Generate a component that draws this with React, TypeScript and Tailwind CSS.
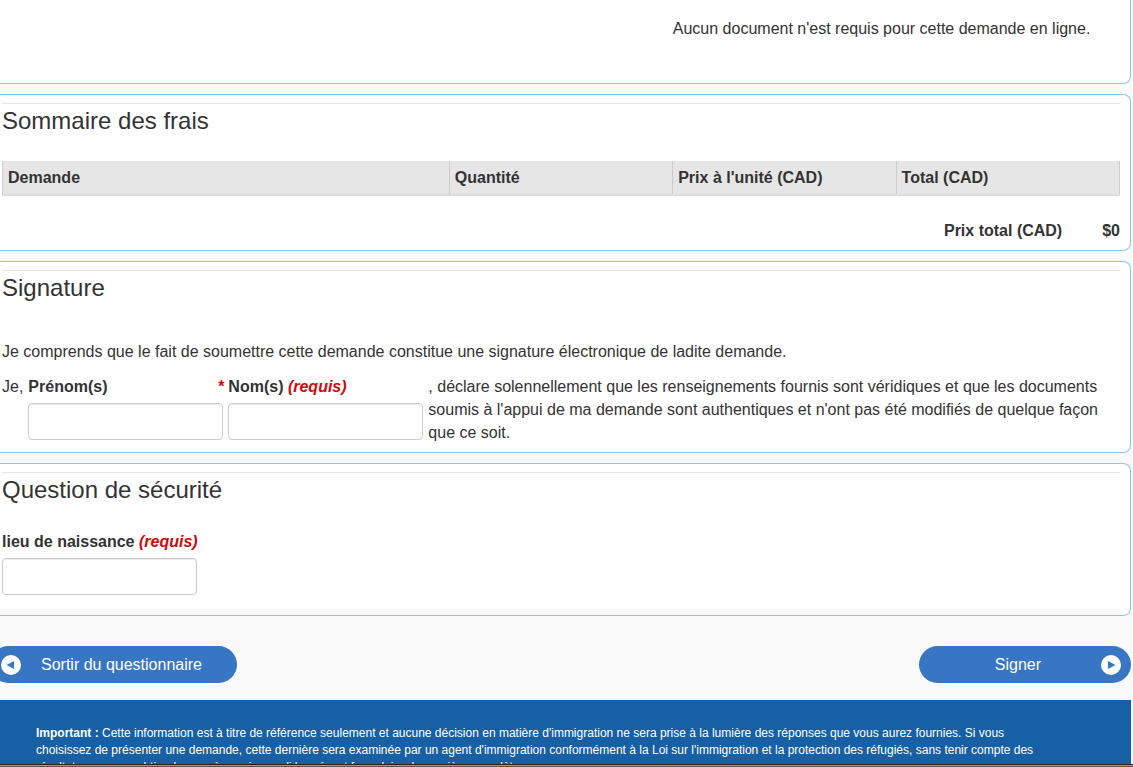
import type { ReactNode } from "react";

const COLUMNS = [
  { label: "Demande", width: "w-2/5" },
  { label: "Quantité", width: "w-1/5" },
  { label: "Prix à l'unité (CAD)", width: "w-1/5" },
  { label: "Total (CAD)", width: "w-1/5" },
];

function Panel({ title, children }: { title: string; children: ReactNode }) {
  return (
    <section className="mt-[10px] rounded-r-lg border border-l-0 border-[#88c9ea] bg-white pt-2 pr-[10px] pl-[2px]">
      <h2 className="border-t border-[#e5e5e5] text-2xl leading-[34px]">{title}</h2>
      {children}
    </section>
  );
}

function Required() {
  return <em className="text-[#d3080c]">(requis)</em>;
}

function TextField({ id, label }: { id: string; label: ReactNode }) {
  return (
    <div className="w-[195px] shrink-0">
      <label htmlFor={id} className="block font-bold whitespace-nowrap">
        {label}
      </label>
      <input
        id={id}
        type="text"
        className="mt-[5px] block h-[37px] w-full rounded border border-[#ccc] bg-white px-3 shadow-[inset_0_1px_1px_rgba(0,0,0,0.075)]"
      />
    </div>
  );
}

function ArrowIcon({ direction }: { direction: "left" | "right" }) {
  return (
    <svg viewBox="0 0 20 20" className="h-5 w-5 shrink-0" aria-hidden="true">
      <circle cx="10" cy="10" r="10" fill="#fff" />
      <path
        d={direction === "left" ? "M13 6v8L5.5 10z" : "M7 6v8l7.5-4z"}
        fill="#3876c4"
      />
    </svg>
  );
}

export default function App() {
  return (
    <div className="flex h-screen flex-col overflow-hidden bg-[#f9f9f9] font-['Liberation_Sans',Arial,sans-serif] text-base leading-[23px] text-[#333]">
      <main className="shrink-0 pr-[2px]">
        <section className="grid grid-cols-5 rounded-br-lg border-r border-b border-[#88c9ea] bg-white pt-[17px] pr-[10px] pb-[43px] pl-[2px]">
          <p className="col-span-2 col-start-4">
            Aucun document n'est requis pour cette demande en ligne.
          </p>
        </section>

        <Panel title="Sommaire des frais">
          <table className="mt-[23px] w-full table-fixed border-collapse text-left">
            <thead>
              <tr className="border-b-2 border-[#ddd] bg-[#e6e6e6]">
                {COLUMNS.map(({ label, width }) => (
                  <th
                    key={label}
                    scope="col"
                    className={`${width} border-x border-x-[#ccc] px-[5px] py-[5px] font-bold`}
                  >
                    {label}
                  </th>
                ))}
              </tr>
            </thead>
          </table>
          <div className="mt-[23px] flex justify-end gap-10 pb-2 font-bold">
            <span>Prix total (CAD)</span>
            <span>$0</span>
          </div>
        </Panel>

        <Panel title="Signature">
          <p className="mt-[35px]">
            Je comprends que le fait de soumettre cette demande constitue une
            signature électronique de ladite demande.
          </p>
          <div className="mt-3 flex gap-[5px] pb-2">
            <span className="shrink-0">Je,</span>
            <TextField id="prenom" label="Prénom(s)" />
            <TextField
              id="nom"
              label={
                <>
                  <span className="absolute -ml-[10px] text-[#d3080c]">*</span>
                  Nom(s) <Required />
                </>
              }
            />
            <p>
              , déclare solennellement que les renseignements fournis sont
              véridiques et que les documents soumis à l'appui de ma demande
              sont authentiques et n'ont pas été modifiés de quelque façon que
              ce soit.
            </p>
          </div>
        </Panel>

        <Panel title="Question de sécurité">
          <div className="mt-[23px] pb-5">
            <TextField
              id="lieu"
              label={
                <>
                  lieu de naissance <Required />
                </>
              }
            />
          </div>
        </Panel>

        <div className="mt-[30px] -ml-[10px] flex justify-between text-white">
          <button
            type="button"
            className="flex h-[37px] items-center gap-5 rounded-full bg-[#3876c4] pr-[35px] pl-[11px]"
          >
            <ArrowIcon direction="left" />
            Sortir du questionnaire
          </button>
          <button
            type="button"
            className="flex h-[37px] w-[212px] items-center justify-end gap-[60px] rounded-full bg-[#3876c4] pr-[10px]"
          >
            Signer
            <ArrowIcon direction="right" />
          </button>
        </div>
      </main>

      <footer className="mt-[17px] mr-[2px] min-h-0 flex-1 overflow-hidden bg-[#1860a6] pt-[25px] pr-[72px] pl-9 text-xs leading-[17px] text-white">
        <p>
          <strong>Important :</strong> Cette information est à titre de
          référence seulement et aucune décision en matière d'immigration ne
          sera prise à la lumière des réponses que vous aurez fournies. Si vous
          choisissez de présenter une demande, cette dernière sera examinée par
          un agent d'immigration conformément à la Loi sur l'immigration et la
          protection des réfugiés, sans tenir compte des résultats que vous
          obtiendrez après avoir rempli le présent formulaire de manière
          complète.
        </p>
      </footer>
      <div className="h-[3px] shrink-0 border-y border-t-[#222] border-b-[#6b4a42] bg-[#a09c9a]" />
    </div>
  );
}
